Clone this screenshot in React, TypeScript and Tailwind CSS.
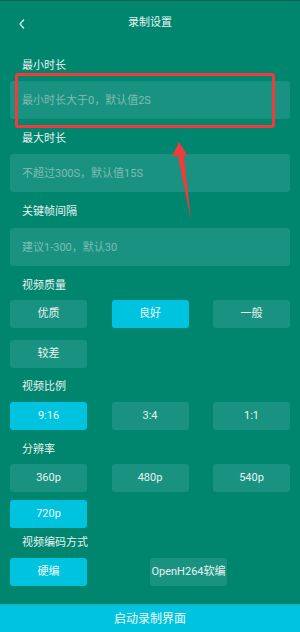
import React from "react";

const font = { fontFamily: "Roboto, 'Noto Sans CJK SC', sans-serif" };

function Label({ text, className }: { text: string; className: string }) {
  return <div className={`h-4 pl-[22px] text-[11px] leading-4 text-[#e6f2ef] ${className}`}>{text}</div>;
}

function Field({ placeholder, className }: { placeholder: string; className: string }) {
  return (
    <div className={`mx-[10px] h-[38px] rounded-[3px] bg-[#1a9282] ${className}`}>
      <input
        placeholder={placeholder}
        className="h-full w-full bg-transparent pl-3 text-[11px] text-white outline-none placeholder:text-[#7fbcb2]"
      />
    </div>
  );
}

function Opt({ text, active }: { text: string; active?: boolean }) {
  return (
    <div
      className={`flex h-[28px] w-[77px] items-center justify-center rounded-[3px] text-[11px] ${
        active ? "bg-[#00c3df] text-[#eaf9fc]" : "bg-[#1a9282] text-[#e6f2ef]"
      }`}
    >
      {text}
    </div>
  );
}

export default function App() {
  return (
    <div className="relative h-[632px] w-[300px] overflow-hidden bg-[#00856f]" style={font}>
      <div className="h-px bg-[#1d5d54]" />
      <div className="relative flex h-[45px] items-center justify-center">
        <svg className="absolute left-[18px] top-[17px]" width="8" height="12" viewBox="0 0 8 12">
          <path d="M6 1.5 L2 6 L6 10.5" fill="none" stroke="#d3e9e4" strokeWidth="1.3" />
        </svg>
        <span className="text-[11px] text-[#e6f2ef]">录制设置</span>
      </div>

      <Label text="最小时长" className="mt-[12px]" />
      <Field placeholder="最小时长大于0，默认值2S" className="mt-[7px]" />
      <Label text="最大时长" className="mt-[12px]" />
      <Field placeholder="不超过300S，默认值15S" className="mt-[7px]" />
      <Label text="关键帧间隔" className="mt-[12px]" />
      <Field placeholder="建议1-300，默认30" className="mt-[8px]" />

      <Label text="视频质量" className="mt-[12px]" />
      <div className="mx-[10px] mt-[6px] flex justify-between">
        <Opt text="优质" />
        <Opt text="良好" active />
        <Opt text="一般" />
      </div>
      <div className="mx-[10px] mt-[12px] flex">
        <Opt text="较差" />
      </div>

      <Label text="视频比例" className="mt-[11px]" />
      <div className="mx-[10px] mt-[7px] flex justify-between">
        <Opt text="9:16" active />
        <Opt text="3:4" />
        <Opt text="1:1" />
      </div>

      <Label text="分辨率" className="mt-[12px]" />
      <div className="mx-[10px] mt-[6px] flex justify-between">
        <Opt text="360p" />
        <Opt text="480p" />
        <Opt text="540p" />
      </div>
      <div className="mx-[10px] mt-[8px] flex">
        <Opt text="720p" active />
      </div>

      <Label text="视频编码方式" className="mt-[7px]" />
      <div className="mx-[10px] mt-[7px] flex gap-[63px]">
        <Opt text="硬编" active />
        <Opt text="OpenH264软编" />
      </div>

      <div className="mt-[18px] flex h-[28px] items-center justify-center border-t border-[#2aa9a6] bg-[#00c3df] text-[12px] text-[#f0fbfd]">
        启动录制界面
      </div>

      <div className="pointer-events-none absolute left-[15px] top-[73px] h-[55px] w-[260px] rounded-[3px] border-[3px] border-[#ef3b3b]" />
      <svg className="pointer-events-none absolute left-0 top-0" width="300" height="632">
        <polygon points="179,142 188,156 184,155 191,221 178,156 172,156" fill="#ef3b3b" />
      </svg>
    </div>
  );
}
